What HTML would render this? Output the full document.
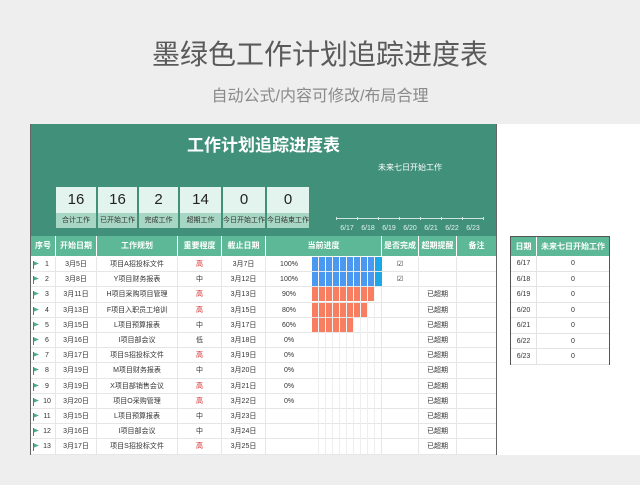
<!DOCTYPE html>
<html><head><meta charset="utf-8"><style>
*{margin:0;padding:0;box-sizing:border-box}
body{width:640px;height:485px;background:#eeeeee;font-family:"Liberation Sans","Noto Sans CJK SC",sans-serif;position:relative;overflow:hidden}
.a{position:absolute}
.t1{left:0;width:640px;top:36px;text-align:center;font-size:28px;color:#5a5a5a;line-height:38px;letter-spacing:0px}
.t2{left:0;width:640px;top:86px;text-align:center;font-size:16px;color:#8a8a8a;line-height:22px}
.panel{left:30px;top:124px;width:467px;height:331px;background:#fff;border-left:1px solid #666;border-right:1px solid #666}
.right{left:497px;top:124px;width:143px;height:331px;background:#fff}
.gh{left:31px;top:124px;width:465px;height:112px;background:#41917a}
.card{top:187px;height:41px;background:#e3f3ee}
.card .n{height:26px;line-height:26px;text-align:center;font-size:15px;color:#222}
.card .l{height:15px;line-height:15px;text-align:center;font-size:7px;color:#333;background:#a8d6c4}
.hd{top:236px;height:20px;background:#5cb897;color:#fff;font-size:8px;font-weight:bold;line-height:20px;text-align:center;border-right:1px solid #fff}
.c{font-size:7px;color:#333;text-align:center;line-height:15px;height:15px}
.row{position:absolute;left:31px;width:465px;height:15.2px;border-bottom:1px solid #e6e6e6}
.row div{position:absolute;top:0;height:15px;line-height:15px;font-size:7px;color:#333;text-align:center;border-right:1px solid #e6e6e6}
.red{color:#d42020!important}
.bar{position:absolute;top:0;height:14px}
.flag{position:absolute;left:2px;top:4px;width:6px;height:8px}
</style></head><body>
<div class="a t1">墨绿色工作计划追踪进度表</div>
<div class="a t2">自动公式/内容可修改/布局合理</div>
<div class="a panel"></div>
<div class="a right"></div>
<div class="a gh"></div>
<div class="a" style="left:31px;width:465px;top:134px;text-align:center;color:#fff;font-size:17px;font-weight:bold;line-height:24px">工作计划追踪进度表</div>
<div class="a" style="left:378px;top:162px;color:#fff;font-size:8px">未来七日开始工作</div>
<div class="a card" style="left:56px;width:40px"><div class="n">16</div><div class="l">合计工作</div></div>
<div class="a card" style="left:98px;width:39px"><div class="n">16</div><div class="l">已开始工作</div></div>
<div class="a card" style="left:139px;width:39px"><div class="n">2</div><div class="l">完成工作</div></div>
<div class="a card" style="left:180px;width:41px"><div class="n">14</div><div class="l">超期工作</div></div>
<div class="a card" style="left:223px;width:42px"><div class="n">0</div><div class="l">今日开始工作</div></div>
<div class="a card" style="left:267px;width:42px"><div class="n">0</div><div class="l">今日结束工作</div></div>
<svg class="a" style="left:330px;top:214px" width="160" height="20"><g stroke="#cfe6dc" stroke-width="1"><line x1="6" y1="4.5" x2="154" y2="4.5"/><line x1="6.5" y1="3" x2="6.5" y2="6"/><line x1="27.5" y1="3" x2="27.5" y2="6"/><line x1="48.5" y1="3" x2="48.5" y2="6"/><line x1="69.5" y1="3" x2="69.5" y2="6"/><line x1="90.5" y1="3" x2="90.5" y2="6"/><line x1="111.5" y1="3" x2="111.5" y2="6"/><line x1="132.5" y1="3" x2="132.5" y2="6"/><line x1="153.5" y1="3" x2="153.5" y2="6"/></g>
<g fill="#e6f3ee" font-size="7" font-family="Liberation Sans" text-anchor="middle"><text x="17" y="16">6/17</text><text x="38" y="16">6/18</text><text x="59" y="16">6/19</text><text x="80" y="16">6/20</text><text x="101" y="16">6/21</text><text x="122" y="16">6/22</text><text x="143" y="16">6/23</text></g></svg>
<div class="a hd" style="left:31px;width:25px">序号</div>
<div class="a hd" style="left:56px;width:41px">开始日期</div>
<div class="a hd" style="left:97px;width:81px">工作规划</div>
<div class="a hd" style="left:178px;width:44px">重要程度</div>
<div class="a hd" style="left:222px;width:44px">截止日期</div>
<div class="a hd" style="left:266px;width:116px">当前进度</div>
<div class="a hd" style="left:382px;width:37px">是否完成</div>
<div class="a hd" style="left:419px;width:38px">超期提醒</div>
<div class="a hd" style="left:457px;width:39px;border-right:none">备注</div>
<div id="rows"></div>
<div class="a" style="left:510px;top:236px;width:100px;height:129px;border:1px solid #555;background:#fff"></div>
<div class="a hd" style="left:511px;width:26px;top:237px;height:19px;line-height:19px">日期</div>
<div class="a hd" style="left:537px;width:72px;top:237px;height:19px;line-height:19px;border-right:none">未来七日开始工作</div>
<div id="r2"></div>
<script>
var d=[["1","3月5日","项目A招投标文件","高","3月7日","100%",100,"☑",""],
["2","3月8日","Y项目财务报表","中","3月12日","100%",100,"☑",""],
["3","3月11日","H项目采购项目管理","高","3月13日","90%",90,"","已超期"],
["4","3月13日","F项目入职员工培训","高","3月15日","80%",80,"","已超期"],
["5","3月15日","L项目预算报表","中","3月17日","60%",60,"","已超期"],
["6","3月16日","I项目部会议","低","3月18日","0%",0,"","已超期"],
["7","3月17日","项目S招投标文件","高","3月19日","0%",0,"","已超期"],
["8","3月19日","M项目财务报表","中","3月20日","0%",0,"","已超期"],
["9","3月19日","X项目部销售会议","高","3月21日","0%",0,"","已超期"],
["10","3月20日","项目O采购管理","高","3月22日","0%",0,"","已超期"],
["11","3月15日","L项目预算报表","中","3月23日","",0,"","已超期"],
["12","3月16日","I项目部会议","中","3月24日","",0,"","已超期"],
["13","3月17日","项目S招投标文件","高","3月25日","",0,"","已超期"]];
var h="";
d.forEach(function(r,i){var y=257+i*15.2;
var grid="background:repeating-linear-gradient(90deg,transparent 0,transparent 6px,#eeeeee 6px,#eeeeee 7px)";
var bar="";
if(r[6]){var w=r[6]*0.7;var col=r[6]==100?"#4a98f0":"#f77e60";
bar='<span class="bar" style="left:0;width:'+w+'px;background:repeating-linear-gradient(90deg,'+col+' 0,'+col+' 6px,rgba(255,255,255,.5) 6px,rgba(255,255,255,.5) 7px)"></span>';
if(r[6]==100)bar+='<span class="bar" style="left:63px;width:7px;background:#1aa8e6"></span>';}
h+='<div class="row" style="top:'+y+'px">'+
'<svg class="flag" viewBox="0 0 6 8"><path d="M0.5 0V8" stroke="#3a8a6c" stroke-width="1"/><path d="M1 0.5L6 2.5L1 4.5Z" fill="#4caa86"/></svg>'+
'<div style="left:0;width:25px;padding-left:8px">'+r[0]+'</div>'+
'<div style="left:25px;width:41px">'+r[1]+'</div>'+
'<div style="left:66px;width:81px">'+r[2]+'</div>'+
'<div style="left:147px;width:44px" class="'+(r[3]=="高"?"red":"")+'">'+r[3]+'</div>'+
'<div style="left:191px;width:44px">'+r[4]+'</div>'+
'<div style="left:235px;width:46px;border-right:none">'+r[5]+'</div>'+
'<div style="left:281px;width:70px;'+grid+'">'+bar+'</div>'+
'<div style="left:351px;width:37px">'+r[7]+'</div>'+
'<div style="left:388px;width:38px">'+r[8]+'</div>'+
'<div style="left:426px;width:39px;border-right:none"></div></div>';});
document.getElementById("rows").innerHTML=h;
var g="";["6/17","6/18","6/19","6/20","6/21","6/22","6/23"].forEach(function(t,i){var y=256+i*15.5;
g+='<div class="a" style="left:511px;top:'+y+'px;width:98px;height:15.5px;border-bottom:1px solid #e3e3e3;font-size:7px;color:#333;line-height:15px"><span style="position:absolute;left:0;width:26px;text-align:center;border-right:1px solid #e3e3e3;height:15px">'+t+'</span><span style="position:absolute;left:26px;width:72px;text-align:center">0</span></div>';});
document.getElementById("r2").innerHTML=g;
</script>
</body></html>
